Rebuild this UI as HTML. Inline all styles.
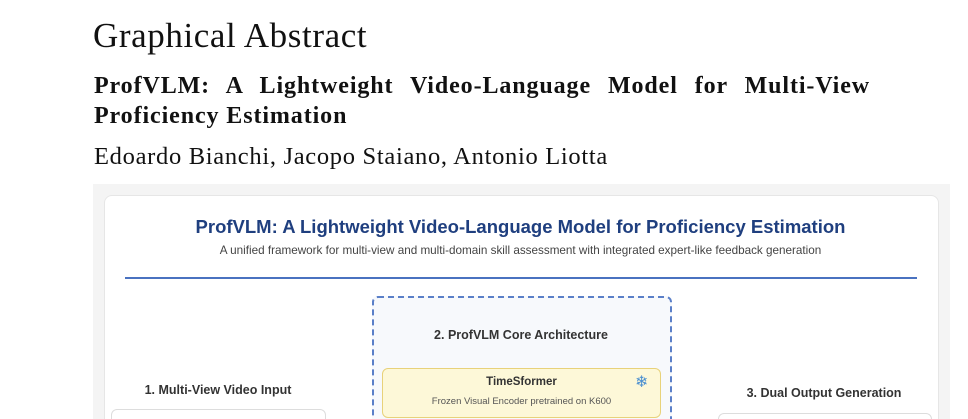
<!DOCTYPE html>
<html><head><meta charset="utf-8"><style>
html,body{margin:0;width:968px;height:419px;overflow:hidden}
body{background:#fff;position:relative;font-family:"Liberation Serif",serif;color:#111}
.a{position:absolute;white-space:nowrap}
.s{font-family:"Liberation Sans",sans-serif}
</style></head><body>
<div class="a" style="left:93px;top:16px;font-size:35px;letter-spacing:0.6px">Graphical Abstract</div>
<div class="a" style="left:94px;top:73px;width:776px;font-size:24px;font-weight:bold;letter-spacing:0.9px;text-align:justify;text-align-last:justify;white-space:normal">ProfVLM: A Lightweight Video-Language Model for Multi-View</div>
<div class="a" style="left:94px;top:103px;font-size:24px;font-weight:bold;letter-spacing:0.9px">Proficiency Estimation</div>
<div class="a" style="left:94px;top:143px;font-size:24.5px;letter-spacing:0.7px">Edoardo Bianchi, Jacopo Staiano, Antonio Liotta</div>

<div class="a" style="left:93px;top:184px;width:857px;height:235px;background:#f4f4f4"></div>
<div class="a" style="left:104px;top:195px;width:833px;height:230px;background:#fff;border-radius:8px;border:1px solid #e6e6e6"></div>
<div class="a s" style="left:104px;width:833px;top:216px;text-align:center;font-size:18.5px;font-weight:bold;color:#1f3f7f">ProfVLM: A Lightweight Video-Language Model for Proficiency Estimation</div>
<div class="a s" style="left:104px;width:833px;top:244px;text-align:center;font-size:11.7px;color:#444">A unified framework for multi-view and multi-domain skill assessment with integrated expert-like feedback generation</div>
<div class="a" style="left:125px;top:277px;width:792px;height:2px;background:#4a72c0"></div>

<div class="a" style="left:372px;top:296px;width:296px;height:130px;border:2px dashed #5a7fc8;border-radius:6px;background:#f7f9fc"></div>
<div class="a s" style="left:372px;width:298px;top:328px;text-align:center;font-size:12.5px;font-weight:bold;color:#333">2. ProfVLM Core Architecture</div>
<div class="a" style="left:382px;top:368px;width:277px;height:48px;border:1px solid #e8d27a;border-radius:6px;background:#fdf8d8"></div>
<div class="a s" style="left:382px;width:279px;top:376px;text-align:center;font-size:11.5px;font-weight:bold;color:#333">TimeSformer</div>
<div class="a s" style="left:382px;width:279px;top:396px;text-align:center;font-size:9.5px;color:#555">Frozen Visual Encoder pretrained on K600</div>
<div class="a" style="left:635px;top:372px;font-size:16px;color:#4a8fd0;font-family:'DejaVu Sans',sans-serif">❄</div>

<div class="a s" style="left:111px;width:214px;top:383px;text-align:center;font-size:12.5px;font-weight:bold;color:#333">1. Multi-View Video Input</div>
<div class="a" style="left:111px;top:409px;width:213px;height:20px;border:1px solid #ddd;border-radius:6px;background:#fff"></div>
<div class="a s" style="left:718px;width:212px;top:386px;text-align:center;font-size:12.5px;font-weight:bold;color:#333">3. Dual Output Generation</div>
<div class="a" style="left:718px;top:413px;width:212px;height:16px;border:1px solid #ddd;border-radius:6px;background:#fff"></div>
</body></html>
